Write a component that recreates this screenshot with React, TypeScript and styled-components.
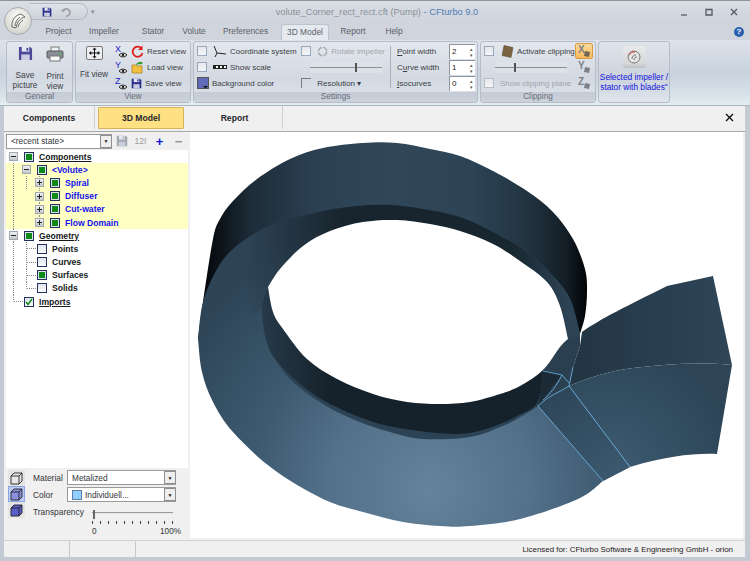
import styled, { createGlobalStyle } from 'styled-components';

const GlobalStyle = createGlobalStyle`
    html, body {
        margin: 0;
        padding: 0;
        background: #c4cad3;
    }
    * {
        box-sizing: border-box;
    }
`;

const Window = styled.div`
    width: 750px;
    height: 561px;
    display: flex;
    flex-direction: column;
    position: relative;
    overflow: hidden;
    font-family: "Liberation Sans", Arial, sans-serif;
    font-size: 8.3px;
    color: #3c3f44;
    background: #c4cad3;
    border-top: 1px solid #8f949b;
`;

const TitleBar = styled.div`
    height: 21px;
    display: flex;
    align-items: center;
    background: linear-gradient(#d9dde4, #cfd4dd);
`;

const QuickAccess = styled.div`
    width: 58px;
    height: 17px;
    margin-left: 30px;
    padding-left: 12px;
    display: flex;
    align-items: center;
    gap: 8px;
    border: 1px solid #b3b9c3;
    border-left: 0;
    border-radius: 0 10px 10px 0;
    background: linear-gradient(#dfe3e9, #cdd2da);
`;

const QuickArrow = styled.span`
    width: 10px;
    margin-left: 3px;
    font-size: 7px;
    color: #8a8f97;
`;

const Title = styled.div`
    flex: 1;
    font-size: 9.3px;
    color: #8b9096;
    text-align: center;
    padding-right: 26px;
    white-space: nowrap;
    span {
        color: #4f7db4;
    }
`;

const WindowButtons = styled.div`
    display: flex;
    align-items: center;
    gap: 15px;
    padding-right: 11px;
`;

const Orb = styled.div`
    position: absolute;
    left: 4px;
    top: 6px;
    width: 28px;
    height: 28px;
    border-radius: 50%;
    border: 1px solid #a5abb3;
    background: radial-gradient(circle at 50% 35%, #fbfbfa, #d6d6d0 75%, #b9bab5);
    display: flex;
    align-items: center;
    justify-content: center;
`;

const TabRow = styled.div`
    height: 18px;
    padding-left: 37px;
    display: flex;
    align-items: flex-end;
    background: #cfd4dd;
`;

const Tab = styled.div<{ $w: number; $active?: boolean }>`
    width: ${(p) => p.$w}px;
    height: 16px;
    line-height: 15px;
    text-align: center;
    font-size: 8.4px;
    color: #5a6068;
    border-radius: 3px 3px 0 0;
    white-space: nowrap;
    ${(p) => p.$active && 'background: linear-gradient(#e4e9f0, #e6ebf1); border: 1px solid #bcc3cd; border-bottom: 0;'}
`;

const HelpBadge = styled.div`
    margin-left: auto;
    margin-right: 6px;
    margin-bottom: 3px;
    width: 10px;
    height: 10px;
    border-radius: 50%;
    background: #2c5fb0;
    color: white;
    font-size: 8px;
    font-weight: bold;
    line-height: 10px;
    text-align: center;
`;

const Ribbon = styled.div`
    height: 66px;
    padding: 1px 4px 2px 6px;
    display: flex;
    gap: 2px;
    background: linear-gradient(#dde3eb, #c9d2de 50%, #d8e2e8 85%, #e3eef0);
    border-bottom: 1px solid #aeb5bf;
`;

const Group = styled.div<{ $w: number }>`
    width: ${(p) => p.$w}px;
    display: flex;
    flex-direction: column;
    border: 1px solid #b6bdc9;
    border-radius: 3px;
    background: linear-gradient(#e3e7ed, #d3d9e2 60%, #dbe3ea);
    overflow: hidden;
`;

const GroupBody = styled.div`
    flex: 1;
    display: flex;
    padding: 1px 2px 0 3px;
    min-height: 0;
`;

const GroupName = styled.div`
    height: 10px;
    line-height: 10px;
    text-align: center;
    color: #666c75;
    font-size: 8.2px;
    background: linear-gradient(#c4cbd6, #ccd3dd);
`;

const BigButton = styled.div<{ $w: number }>`
    width: ${(p) => p.$w}px;
    flex: none;
    display: flex;
    flex-direction: column;
    align-items: center;
    text-align: center;
    line-height: 9.5px;
    svg {
        margin: 3px 0 10px;
    }
`;

const Stack = styled.div<{ $w?: number; $push?: number }>`
    ${(p) => p.$w && `width: ${p.$w}px;`}
    ${(p) => p.$push && `margin-left: ${p.$push}px;`}
    display: flex;
    flex-direction: column;
`;

const Line = styled.div<{ $muted?: boolean }>`
    height: 16px;
    display: flex;
    align-items: center;
    gap: 3px;
    font-size: 8px;
    white-space: nowrap;
    color: ${(p) => (p.$muted ? '#a2a6ac' : '#3c3f44')};
`;

const Check = styled.span<{ $muted?: boolean }>`
    width: 10px;
    height: 10px;
    flex: none;
    margin-right: 3px;
    border: 1px solid ${(p) => (p.$muted ? '#b7bcc3' : '#9aa6bb')};
    background: linear-gradient(#e6e8ec, #f4f5f7);
`;

const CornerBox = styled.span`
    width: 10px;
    height: 10px;
    flex: none;
    margin-right: 1px;
    border: 1px solid #777b82;
    border-width: 1px 0 0 1px;
`;

const Slider = styled.div<{ $w: number; $at: number; $push: number }>`
    width: ${(p) => p.$w}px;
    height: 11px;
    margin-left: ${(p) => p.$push}px;
    background:
        linear-gradient(#555, #555) ${(p) => p.$at}px 1px / 2px 9px no-repeat,
        linear-gradient(#8b8f95, #8b8f95) 0 5px / 100% 1px no-repeat,
        #dde2e9;
`;

const Divider = styled.div`
    width: 1px;
    height: 42px;
    margin: 3px 6px 0 5px;
    background: #aab1bc;
`;

const Spin = styled.div`
    width: 26px;
    height: 15px;
    margin-left: auto;
    padding: 0 2px;
    display: flex;
    align-items: center;
    justify-content: space-between;
    background: #fff;
    border: 1px solid #8d949e;
    border-width: 1px 0 0 1px;
    color: #222;
    i {
        font-style: normal;
        font-size: 5px;
        line-height: 6px;
        color: #555;
        text-align: center;
    }
`;

const AxisButton = styled.div<{ $on?: boolean }>`
    width: 18px;
    height: 16px;
    display: flex;
    align-items: center;
    justify-content: center;
    border-radius: 2px;
    ${(p) => p.$on && 'background: linear-gradient(#fddc9a, #f8b85c); border: 1px solid #d99b45;'}
`;

const SelectedGroup = styled.div`
    width: 72px;
    padding: 4px 0 0;
    display: flex;
    flex-direction: column;
    align-items: center;
    border: 1px solid #b6bdc9;
    border-radius: 3px;
    background: linear-gradient(#dfe3ea, #ccd3dd 60%, #dfe5eb);
    color: #1414e0;
    font-size: 8.3px;
    line-height: 9.8px;
    text-align: center;
    white-space: nowrap;
`;

const SelectedIcon = styled.div`
    width: 23px;
    height: 22px;
    margin-bottom: 5px;
    display: flex;
    align-items: center;
    justify-content: center;
    background: linear-gradient(#e8e9ea, #d6d7d8 80%, #bcbfc3);
    border-radius: 2px;
`;

const Body = styled.div`
    flex: 1;
    min-height: 0;
    display: flex;
    flex-direction: column;
    margin: 0 5px 4px 4px;
    background: #f0f0f0;
`;

const PageTabs = styled.div`
    height: 26px;
    display: flex;
    align-items: stretch;
    border-bottom: 1px solid #a9a9a9;
    padding-bottom: 2px;
`;

const PageTab = styled.div<{ $w: number; $active?: boolean }>`
    width: ${(p) => p.$w}px;
    display: flex;
    align-items: center;
    justify-content: center;
    font-weight: bold;
    font-size: 8.6px;
    color: #24272b;
    border-right: 1px solid #d0d0d0;
    ${(p) => p.$active && 'background: #ffe083; border: 1px solid #d4b45c; margin: 1px 3px 0 3px; border-radius: 1px;'}
`;

const CloseMark = styled.div`
    margin-left: auto;
    margin-right: 3px;
    width: 26px;
    display: flex;
    align-items: center;
    justify-content: center;
`;

const Main = styled.div`
    flex: 1;
    min-height: 0;
    display: flex;
    gap: 2px;
    padding-right: 2px;
`;

const LeftPanel = styled.div`
    width: 184px;
    padding-left: 2px;
    display: flex;
    flex-direction: column;
`;

const ComboRow = styled.div`
    height: 18px;
    display: flex;
    align-items: center;
`;

const Combo = styled.div<{ $w?: number; $h?: number }>`
    width: ${(p) => p.$w ?? 106}px;
    height: ${(p) => p.$h ?? 15}px;
    padding-left: 4px;
    display: flex;
    align-items: center;
    justify-content: space-between;
    background: #fff;
    border: 1px solid #9a9a9a;
    border-width: 1px 0 1px 1px;
    color: #33363a;
    white-space: nowrap;
`;

const ComboArrow = styled.span`
    width: 12px;
    height: 100%;
    flex: none;
    display: flex;
    align-items: center;
    justify-content: center;
    border: 1px solid #8f8f8f;
    background: #eee;
    font-size: 5px;
    color: #111;
`;

const ToolIcons = styled.div`
    display: flex;
    align-items: center;
    font-weight: bold;
`;

const ToolIcon = styled.span<{ $color: string }>`
    width: 19px;
    display: flex;
    align-items: center;
    justify-content: center;
    color: ${(p) => p.$color};
    font-size: 13px;
    line-height: 13px;
`;

const TinyTool = styled(ToolIcon)`
    font-size: 8.5px;
    font-weight: normal;
`;

const Tree = styled.div`
    flex: 1;
    background: #fff;
`;

const Row = styled.div<{ $depth: number; $hot?: boolean; $guides: string }>`
    height: 13.2px;
    padding-left: ${(p) => 3 + p.$depth * 13}px;
    display: flex;
    align-items: center;
    background: ${(p) => p.$guides}${(p) => (p.$hot ? '#ffffc4' : '#fff')};
`;

const Expander = styled.span<{ $on: boolean; $open?: boolean }>`
    width: 9px;
    height: 9px;
    flex: none;
    margin-right: 6px;
    ${(p) =>
        p.$on &&
        `border: 1px solid #a4a9b0;
         background:
            linear-gradient(#222, #222) center / 5px 1px no-repeat,
            ${p.$open ? '' : 'linear-gradient(#222, #222) center / 1px 5px no-repeat,'}
            linear-gradient(#eef0f2, #c4c8ce);`}
`;

const TreeBox = styled.span<{ $state: string }>`
    width: 10px;
    height: 10px;
    flex: none;
    margin-right: 5px;
    border: 1px solid #23315f;
    display: flex;
    align-items: center;
    justify-content: center;
    background: ${(p) =>
        p.$state === 'on'
            ? 'linear-gradient(#0d8a1a, #0d8a1a) center / 6px 6px no-repeat, #dfe2e6'
            : 'linear-gradient(#e2e4ea, #fbfbfc)'};
`;

const TreeLabel = styled.span<{ $hot?: boolean; $under?: boolean }>`
    font-weight: bold;
    font-size: 8.6px;
    white-space: nowrap;
    color: ${(p) => (p.$hot ? '#1212f0' : '#16181c')};
    text-decoration: ${(p) => (p.$under ? 'underline' : 'none')};
`;

const Appearance = styled.div`
    height: 70px;
    display: flex;
    padding-top: 1px;
`;

const ModeColumn = styled.div`
    width: 17px;
    margin: 1px 0 0 2px;
    display: flex;
    flex-direction: column;
`;

const ModeButton = styled.div<{ $on?: boolean }>`
    height: 16px;
    display: flex;
    align-items: center;
    justify-content: center;
    background: ${(p) => (p.$on ? '#bccdf4' : '#e4e4e4')};
    ${(p) => p.$on && 'border: 1px solid #8aa5e6;'}
`;

const Fields = styled.div`
    flex: 1;
    margin-left: 8px;
    display: grid;
    grid-template-columns: 34px 110px;
    grid-auto-rows: 17px;
    align-items: center;
`;

const FieldLabel = styled.div`
    font-size: 8.4px;
    color: #33363a;
`;

const Swatch = styled.span`
    width: 10px;
    height: 10px;
    margin-right: 3px;
    border: 1px solid #5e7da0;
    background: #8fd0ff;
    flex: none;
`;

const ComboText = styled.span`
    display: flex;
    align-items: center;
`;

const TransparencyRow = styled.div`
    grid-column: 1 / 3;
    margin-top: 4px;
    display: grid;
    grid-template-columns: 59px 81px;
    font-size: 8.4px;
    color: #33363a;
    align-self: start;
`;

const TrackBox = styled.div`
    height: 9px;
    margin-top: 3px;
    background:
        linear-gradient(#666, #666) 1px 0 / 2px 9px no-repeat,
        linear-gradient(#9a9a9a, #9a9a9a) 0 2px / 100% 1px no-repeat,
        linear-gradient(#e6e6e6, #e6e6e6) 0 3px / 100% 1px no-repeat;
`;

const Ticks = styled.div`
    height: 3px;
    margin-top: 2px;
    grid-column: 2;
    background: repeating-linear-gradient(90deg, #444 0 1px, transparent 1px 8px);
`;

const TrackEnds = styled.div`
    grid-column: 2;
    margin-top: 3px;
    display: flex;
    justify-content: space-between;
    margin-right: -8px;
    font-size: 8.2px;
`;

const Viewport = styled.div`
    flex: 1;
    background: #fff;
    overflow: hidden;
    svg {
        display: block;
    }
`;

const StatusBar = styled.div`
    height: 17px;
    margin-top: 2px;
    display: flex;
    background: #f0f0f0;
    border-top: 1px solid #d2d2d2;
    font-size: 7.9px;
    color: #1e2023;
`;

const StatusCell = styled.div<{ $w?: number }>`
    ${(p) => (p.$w ? `width: ${p.$w}px; border-right: 1px solid #c8c8c8;` : 'flex: 1; text-align: right; padding: 4px 12px 0 0;')}
`;

function Floppy({ size = 14, color = '#3f3d9e' }: { size?: number; color?: string }) {
    return (
        <svg width={size} height={size} viewBox="0 0 16 16">
            <path d="M1 1h12l2 2v12H1z" fill={color} />
            <rect x="4" y="1" width="8" height="5" fill="#e6e8f2" />
            <rect x="9" y="2" width="2" height="3" fill={color} />
            <rect x="3.5" y="9" width="9" height="6" fill="#c9cde0" />
        </svg>
    );
}

function Printer() {
    return (
        <svg width={18} height={16} viewBox="0 0 18 16">
            <rect x="5" y="1" width="8" height="5" fill="#f2f2f2" stroke="#777" />
            <rect x="1" y="5" width="16" height="7" rx="1" fill="#8b8e99" stroke="#55585f" />
            <rect x="4" y="10" width="10" height="5" fill="#fafafa" stroke="#777" />
            <rect x="13" y="7" width="2" height="1.5" fill="#3fbf3f" />
        </svg>
    );
}

function FitIcon() {
    return (
        <svg width={17} height={14} viewBox="0 0 17 14">
            <rect x="0.5" y="0.5" width="16" height="13" rx="1.5" fill="#eceef2" stroke="#777" />
            <path d="M8.5 2v10M3.5 7h10" stroke="#111" />
            <path d="M8.5 1.5l2 2.2h-4zM8.5 12.5l2-2.2h-4zM3 7l2.2-2v4zM14 7l-2.2-2v4z" fill="#111" />
        </svg>
    );
}

function AxisEye({ letter }: { letter: string }) {
    return (
        <svg width={13} height={14} viewBox="0 0 13 14">
            <text x="0" y="8" fontSize="9" fontFamily="Liberation Sans" fill="#2222c8">{letter}</text>
            <path d="M4 11c2-2.5 6-2.5 8 0-2 2.5-6 2.5-8 0z" fill="#ddd" stroke="#222" strokeWidth="1" />
            <circle cx="8" cy="11" r="1.2" fill="#222" />
        </svg>
    );
}

function AxisClip({ letter, on }: { letter: string; on?: boolean }) {
    return (
        <svg width={15} height={14} viewBox="0 0 15 14">
            <text x="1" y="9" fontSize="10" fontWeight="bold" fontFamily="Liberation Sans" fill="#7f8186">{letter}</text>
            <path d="M8 7l5 1-1 5-5-1z" fill={on ? '#6f6658' : '#7d7f84'} />
        </svg>
    );
}

function ResetIcon() {
    return (
        <svg width={13} height={13} viewBox="0 0 13 13">
            <path d="M10.5 3.5A5 5 0 1 0 11.5 8" fill="none" stroke="#e01818" strokeWidth="1.7" />
            <path d="M11.5 0.5v4.500h-4.500z" fill="#e01818" />
        </svg>
    );
}

function FolderIcon() {
    return (
        <svg width={13} height={13} viewBox="0 0 13 13">
            <path d="M1 4h4l1 1h5v7H1z" fill="#f0c040" stroke="#a98016" strokeWidth="0.7" />
            <path d="M5 4c1-3 3-3 5-3l-1-1 3 2-3 2.500 1-1.500c-2 0-3 0-5 1z" fill="#2d9a2d" />
        </svg>
    );
}

function TriadIcon() {
    return (
        <svg width={14} height={13} viewBox="0 0 14 13">
            <path d="M4 8L1 1M4 8l9 1M4 8l-2 4" stroke="#222" strokeWidth="1" fill="none" />
        </svg>
    );
}

function RulerIcon() {
    return (
        <svg width={14} height={5} viewBox="0 0 14 5">
            <rect width="14" height="4" fill="#222" />
            <path d="M3 1h2v2H3zM7 1h2v2H7zM11 1h2v2h-2z" fill="#fff" />
        </svg>
    );
}

function BackColorIcon() {
    return (
        <svg width={12} height={12} viewBox="0 0 12 12">
            <rect x="0.5" y="0.5" width="11" height="11" fill="#5f6bb8" stroke="#555" />
            <path d="M6 9h5l-2.500 2.500z" fill="#111" />
        </svg>
    );
}

function RotateIcon() {
    return (
        <svg width={13} height={13} viewBox="0 0 13 13">
            <circle cx="6.5" cy="6.5" r="4.8" fill="none" stroke="#a8acb2" strokeWidth="1.7" strokeDasharray="6 1.5" />
        </svg>
    );
}

function ClipIcon() {
    return (
        <svg width={14} height={13} viewBox="0 0 14 13">
            <path d="M4 0.5l9 2-2 10-9-2z" fill="#7a6240" stroke="#54432b" strokeWidth="0.5" />
        </svg>
    );
}

function Mark({ d }: { d: string }) {
    return (
        <svg width={10} height={10} viewBox="0 0 10 10">
            <path d={d} fill="none" stroke="#555b63" strokeWidth="1.3" />
        </svg>
    );
}

function CubeIcon({ fill }: { fill: string }) {
    return (
        <svg width={13} height={13} viewBox="0 0 13 13">
            <path d="M1 4l3-3h8v8l-3 3H1z" fill={fill} stroke="#222" strokeWidth="0.9" />
            <path d="M1 4h8v8M9 4l3-3" fill="none" stroke="#222" strokeWidth="0.9" />
        </svg>
    );
}

type Point = [number, number];

// smooth line through the points, as path commands without the leading move
function spline(points: Point[]) {
    let d = '';
    for (let i = 0; i < points.length - 1; i++) {
        const p0 = points[i - 1] ?? points[i];
        const p1 = points[i];
        const p2 = points[i + 1];
        const p3 = points[i + 2] ?? p2;
        const c1x = p1[0] + (p2[0] - p0[0]) / 6;
        const c1y = p1[1] + (p2[1] - p0[1]) / 6;
        const c2x = p2[0] - (p3[0] - p1[0]) / 6;
        const c2y = p2[1] - (p3[1] - p1[1]) / 6;
        d += `C${c1x} ${c1y} ${c2x} ${c2y} ${p2[0]} ${p2[1]}`;
    }
    return d;
}

const open = (points: Point[]) => `M${points[0][0]} ${points[0][1]}${spline(points)}`;
const rev = (points: Point[]) => [...points].reverse();

const backEdge: Point[] = [[198, 340], [203, 303], [213, 240], [220, 220], [233, 202], [257, 180], [290, 160], [323, 149], [363, 144], [397, 144], [430, 150], [460, 157], [493, 172], [527, 192], [553, 213], [573, 240], [585, 270], [587, 293], [585, 317], [580, 335]];
const ringTop: Point[] = [[198, 340], [203, 303], [217, 270], [233, 250], [257, 233], [283, 222], [323, 212], [357, 207], [390, 206], [423, 210], [460, 218], [493, 233], [527, 253], [553, 277], [570, 300], [580, 335]];
const ringLower: Point[] = [[198, 340], [202, 373], [213, 403], [233, 433], [273, 470], [323, 500], [363, 513], [403, 523], [440, 527], [470, 527], [520, 520], [578, 500], [603, 482]];
const holeTop: Point[] = [[268, 288], [280, 270], [303, 247], [330, 232], [363, 223], [397, 221], [430, 225], [460, 232], [493, 245], [520, 262], [547, 283], [560, 307], [568, 340]];
const holeLow: Point[] = [[568, 340], [560, 348], [543, 371], [520, 387], [500, 395], [470, 403], [440, 405], [407, 403], [373, 395], [337, 380], [307, 360], [283, 330], [273, 313], [268, 288]];
const wallLight: Point[] = [[263, 330], [270, 350], [290, 380], [323, 405], [357, 422], [390, 433], [423, 440], [470, 438], [500, 428], [517, 420], [538, 407]];
const wallDark: Point[] = [[268, 288], [262, 310], [266, 340], [275, 360], [300, 385], [330, 405], [380, 425], [437, 434], [470, 434], [500, 425], [517, 417], [537, 404], [543, 371]];

function VoluteModel() {
    const ring = `${open(ringLower)}L630 468L569 387L580 335${spline(rev(ringTop))}Z`;
    const band = `${open(ringTop.slice(1))}L568 340${spline(rev(holeTop))}L262 310L232 330Z`;
    const hole = `${open(holeTop)}${spline(holeLow)}Z`;
    return (
        <svg width={553} height={405} viewBox="190 133 553 405">
            <defs>
                <linearGradient id="back" gradientUnits="userSpaceOnUse" x1="205" y1="0" x2="587" y2="0">
                    <stop offset="0" stopColor="#04080b" />
                    <stop offset="0.12" stopColor="#1d2c38" />
                    <stop offset="0.3" stopColor="#2c4254" />
                    <stop offset="0.48" stopColor="#2f4759" />
                    <stop offset="0.7" stopColor="#2c4456" />
                    <stop offset="0.85" stopColor="#22333f" />
                    <stop offset="0.95" stopColor="#121c24" />
                    <stop offset="1" stopColor="#020406" />
                </linearGradient>
                <radialGradient id="ring" gradientUnits="userSpaceOnUse" cx="430" cy="490" r="285">
                    <stop offset="0" stopColor="#64849b" />
                    <stop offset="0.35" stopColor="#53718a" />
                    <stop offset="0.62" stopColor="#3d5a70" />
                    <stop offset="1" stopColor="#2d4456" />
                </radialGradient>
                <linearGradient id="band" gradientUnits="userSpaceOnUse" x1="245" y1="0" x2="570" y2="0">
                    <stop offset="0" stopColor="#18242d" stopOpacity="0" />
                    <stop offset="0.3" stopColor="#18242d" />
                    <stop offset="0.82" stopColor="#18262f" />
                    <stop offset="1" stopColor="#2d4456" />
                </linearGradient>
                <linearGradient id="wall" gradientUnits="userSpaceOnUse" x1="262" y1="0" x2="330" y2="0">
                    <stop offset="0" stopColor="#263a49" />
                    <stop offset="1" stopColor="#16222b" />
                </linearGradient>
                <linearGradient id="tailTop" gradientUnits="userSpaceOnUse" x1="582" y1="0" x2="732" y2="0">
                    <stop offset="0" stopColor="#233644" />
                    <stop offset="0.6" stopColor="#2a4052" />
                    <stop offset="1" stopColor="#2e4658" />
                </linearGradient>
                <radialGradient id="tailLow" gradientUnits="userSpaceOnUse" cx="610" cy="470" r="125">
                    <stop offset="0" stopColor="#3d5b71" />
                    <stop offset="1" stopColor="#2d4557" />
                </radialGradient>
                <linearGradient id="cut" gradientUnits="userSpaceOnUse" x1="555" y1="395" x2="615" y2="475">
                    <stop offset="0" stopColor="#2e4659" />
                    <stop offset="1" stopColor="#3b586e" />
                </linearGradient>
            </defs>
            <path d={`${open(backEdge)}Z`} fill="url(#back)" />
            <path d={ring} fill="url(#ring)" />
            <path d={band} fill="url(#band)" />
            <path d={`${open(wallLight)}L543 371L263 330Z`} fill="#2c4355" />
            <path d={`${open(wallDark)}${spline(rev(holeLow))}Z`} fill="url(#wall)" />
            <path d="M568 340L580 335L580 347L573 368L569 387L562 376L543 372L560 348Z" fill="#2a3f4f" />
            <path d="M543 371L562 376L543 401L538 407Z" fill="#1b2a35" />
            <path d="M543 401L562 376L569 387L538 407Z" fill="#2b414f" />
            <path d={hole} fill="#fff" />
            <path d="M582 333C600 320 627 307 667 287L713 277L732 366C700 363 667 365 633 369C610 372 590 378 569 387L573 368L580 347Z" fill="url(#tailTop)" />
            <path d="M569 387C590 378 610 372 633 369C667 365 700 363 732 366L717 455C695 454 667 457 630 468Z" fill="url(#tailLow)" />
            <path d="M538 407L569 387L630 468L603 482Z" fill="url(#cut)" />
            <g fill="none" stroke="#6fb8ea" strokeWidth="0.8">
                <path d="M538 407L603 482M569 387L630 468" />
                <path d="M538 407C548 397 558 394 569 387L573 368" />
                <path d="M543 372L562 376L569 384M562 376C556 388 550 395 543 401" />
            </g>
        </svg>
    );
}

interface TreeItem {
    label: string;
    depth: number;
    expander?: 'open' | 'closed';
    state: 'on' | 'off' | 'tick';
    hot?: boolean;
    under?: boolean;
    guides: string;
}

const v = (x: number) => `repeating-linear-gradient(#8a8a8a 0 1px, transparent 1px 2px) ${x}px 0 / 1px 100% no-repeat, `;
const vEnd = (x: number) => `repeating-linear-gradient(#8a8a8a 0 1px, transparent 1px 2px) ${x}px 0 / 1px 50% no-repeat, `;
const h = (x: number, w: number) => `repeating-linear-gradient(90deg, #8a8a8a 0 1px, transparent 1px 2px) ${x}px 50% / ${w}px 1px no-repeat, `;

const treeItems: TreeItem[] = [
    { label: 'Components', depth: 0, expander: 'open', state: 'on', under: true, guides: '' },
    { label: '<Volute>', depth: 1, expander: 'open', state: 'on', hot: true, guides: v(7) },
    { label: 'Spiral', depth: 2, expander: 'closed', state: 'on', hot: true, guides: v(7) + v(20) + v(33) },
    { label: 'Diffuser', depth: 2, expander: 'closed', state: 'on', hot: true, guides: v(7) + v(33) },
    { label: 'Cut-water', depth: 2, expander: 'closed', state: 'on', hot: true, guides: v(7) + v(33) },
    { label: 'Flow Domain', depth: 2, expander: 'closed', state: 'on', hot: true, guides: v(7) + vEnd(33) },
    { label: 'Geometry', depth: 0, expander: 'open', state: 'on', under: true, guides: v(7) },
    { label: 'Points', depth: 1, state: 'off', guides: v(7) + v(20) + h(21, 9) },
    { label: 'Curves', depth: 1, state: 'off', guides: v(7) + v(20) + h(21, 9) },
    { label: 'Surfaces', depth: 1, state: 'on', guides: v(7) + v(20) + h(21, 9) },
    { label: 'Solids', depth: 1, state: 'off', guides: v(7) + vEnd(20) + h(21, 9) },
    { label: 'Imports', depth: 0, state: 'tick', under: true, guides: vEnd(7) + h(8, 9) },
];

const ribbonTabs: [string, number][] = [
    ['Project', 43],
    ['Impeller', 48],
    ['Stator', 50],
    ['Volute', 32],
    ['Preferences', 71],
    ['3D Model', 48],
    ['Report', 48],
    ['Help', 34],
];

function App() {
    return (
        <Window>
            <GlobalStyle />
            <TitleBar>
                <QuickAccess>
                    <Floppy size={10} color="#2b2f8e" />
                    <svg width={12} height={10} viewBox="0 0 12 10">
                        <path d="M3 5a3.5 3.5 0 1 1 3 4" fill="none" stroke="#a2a6ac" strokeWidth="2" />
                        <path d="M0 4h5v-3z" fill="#a2a6ac" />
                    </svg>
                </QuickAccess>
                <QuickArrow>▾</QuickArrow>
                <Title>
                    volute_Corner_rect_rect.cft (Pump) <span>- CFturbo 9.0</span>
                </Title>
                <WindowButtons>
                    <Mark d="M2 8h6" />
                    <Mark d="M2 2.5h6v5.5h-6z" />
                    <Mark d="M2 2l6 6M8 2l-6 6" />
                </WindowButtons>
            </TitleBar>
            <Orb>
                <svg width={18} height={18} viewBox="0 0 18 18">
                    <path d="M3 15C2 9 6 3 12 2l4 3c-5 1-8 5-9 11zM6 14c0-3 2-7 5-9M9 15c1-3 2-5 5-7" fill="none" stroke="#6b6b66" strokeWidth="1" />
                </svg>
            </Orb>
            <TabRow>
                {ribbonTabs.map(([name, w]) => (
                    <Tab key={name} $w={w} $active={name === '3D Model'}>
                        {name}
                    </Tab>
                ))}
                <HelpBadge>?</HelpBadge>
            </TabRow>
            <Ribbon>
                <Group $w={67}>
                    <GroupBody>
                        <BigButton $w={30}>
                            <Floppy size={15} color="#4b4a9a" />
                            Save
                            <br />
                            picture
                        </BigButton>
                        <BigButton $w={30}>
                            <Printer />
                            Print
                            <br />
                            view
                        </BigButton>
                    </GroupBody>
                    <GroupName>General</GroupName>
                </Group>
                <Group $w={116}>
                    <GroupBody>
                        <BigButton $w={30}>
                            <FitIcon />
                            <div>Fit view</div>
                        </BigButton>
                        <Stack $push={6}>
                            <Line><AxisEye letter="X" /><ResetIcon />Reset view</Line>
                            <Line><AxisEye letter="Y" /><FolderIcon />Load view</Line>
                            <Line><AxisEye letter="Z" /><Floppy size={11} color="#2b2f8e" />Save view</Line>
                        </Stack>
                    </GroupBody>
                    <GroupName>View</GroupName>
                </Group>
                <Group $w={285}>
                    <GroupBody>
                        <Stack $w={104}>
                            <Line><Check /><TriadIcon />Coordinate system</Line>
                            <Line><Check /><RulerIcon />Show scale</Line>
                            <Line><BackColorIcon />Background color</Line>
                        </Stack>
                        <Stack $w={84}>
                            <Line $muted><Check /><RotateIcon />Rotate impeller</Line>
                            <Line><Slider $w={72} $push={9} $at={45} /></Line>
                            <Line><CornerBox />&nbsp;Resolution ▾</Line>
                        </Stack>
                        <Divider />
                        <Stack $w={78}>
                            <Line><span><u>P</u>oint width</span><Spin>2<i>▴<br />▾</i></Spin></Line>
                            <Line><span>C<u>u</u>rve width</span><Spin>1<i>▴<br />▾</i></Spin></Line>
                            <Line><span><u>I</u>socurves</span><Spin>0<i>▴<br />▾</i></Spin></Line>
                        </Stack>
                    </GroupBody>
                    <GroupName>Settings</GroupName>
                </Group>
                <Group $w={116}>
                    <GroupBody>
                        <Stack $w={91}>
                            <Line><Check /><ClipIcon />Activate clipping</Line>
                            <Line><Slider $w={72} $push={11} $at={19} /></Line>
                            <Line $muted><Check $muted />Show clipping plane</Line>
                        </Stack>
                        <Stack>
                            <AxisButton $on><AxisClip letter="X" on /></AxisButton>
                            <AxisButton><AxisClip letter="Y" /></AxisButton>
                            <AxisButton><AxisClip letter="Z" /></AxisButton>
                        </Stack>
                    </GroupBody>
                    <GroupName>Clipping</GroupName>
                </Group>
                <SelectedGroup>
                    <SelectedIcon>
                        <svg width={14} height={14} viewBox="0 0 14 14">
                            <circle cx="7" cy="7" r="6" fill="#e4e4e4" stroke="#777" />
                            <path d="M2.5 5A5 5 0 0 1 8 2" fill="none" stroke="#d33" />
                            <path d="M5 9c0-3 2-4 4-4M7 10c0-2 1-3 3-3" fill="none" stroke="#777" />
                        </svg>
                    </SelectedIcon>
                    Selected impeller /
                    <br />
                    stator with blades"
                </SelectedGroup>
            </Ribbon>
            <Body>
                <PageTabs>
                    <PageTab $w={91}>Components</PageTab>
                    <PageTab $w={86} $active>3D Model</PageTab>
                    <PageTab $w={96}>Report</PageTab>
                    <CloseMark>
                        <svg width={9} height={9} viewBox="0 0 9 9">
                            <path d="M1 1l7 7M8 1l-7 7" stroke="#111" strokeWidth="1.4" />
                        </svg>
                    </CloseMark>
                </PageTabs>
                <Main>
                    <LeftPanel>
                        <ComboRow>
                            <Combo>
                                {'<recent state>'}
                                <ComboArrow>▼</ComboArrow>
                            </Combo>
                            <ToolIcons>
                                <ToolIcon $color="#a3a6aa"><Floppy size={12} color="#a3a6aa" /></ToolIcon>
                                <TinyTool $color="#9b9b9b">12I</TinyTool>
                                <ToolIcon $color="#1414d8">+</ToolIcon>
                                <ToolIcon $color="#8f9297">−</ToolIcon>
                            </ToolIcons>
                        </ComboRow>
                        <Tree>
                            {treeItems.map((item) => (
                                <Row key={item.label} $depth={item.depth} $hot={item.hot} $guides={item.guides}>
                                    <Expander $on={!!item.expander} $open={item.expander === 'open'} />
                                    <TreeBox $state={item.state}>
                                        {item.state === 'tick' && (
                                            <svg width={8} height={8} viewBox="0 0 8 8">
                                                <path d="M1 4l2 2.5L7 1" fill="none" stroke="#0d8a1a" strokeWidth="1.4" />
                                            </svg>
                                        )}
                                    </TreeBox>
                                    <TreeLabel $hot={item.hot} $under={item.under}>{item.label}</TreeLabel>
                                </Row>
                            ))}
                        </Tree>
                        <Appearance>
                            <ModeColumn>
                                <ModeButton><CubeIcon fill="#e8e8e8" /></ModeButton>
                                <ModeButton $on><CubeIcon fill="#8b90e0" /></ModeButton>
                                <ModeButton><CubeIcon fill="#5a5fc8" /></ModeButton>
                            </ModeColumn>
                            <Fields>
                                <FieldLabel>Material</FieldLabel>
                                <Combo $w={109} $h={15}>
                                    Metalized
                                    <ComboArrow>▼</ComboArrow>
                                </Combo>
                                <FieldLabel>Color</FieldLabel>
                                <Combo $w={109} $h={15}>
                                    <ComboText><Swatch />Individuell...</ComboText>
                                    <ComboArrow>▼</ComboArrow>
                                </Combo>
                                <TransparencyRow>
                                    <span>Transparency</span>
                                    <TrackBox />
                                    <Ticks />
                                    <TrackEnds><span>0</span><span>100%</span></TrackEnds>
                                </TransparencyRow>
                            </Fields>
                        </Appearance>
                    </LeftPanel>
                    <Viewport>
                        <VoluteModel />
                    </Viewport>
                </Main>
                <StatusBar>
                    <StatusCell $w={66} />
                    <StatusCell $w={66} />
                    <StatusCell>Licensed for: CFturbo Software &amp; Engineering GmbH - orion</StatusCell>
                </StatusBar>
            </Body>
        </Window>
    );
}

export default App;
